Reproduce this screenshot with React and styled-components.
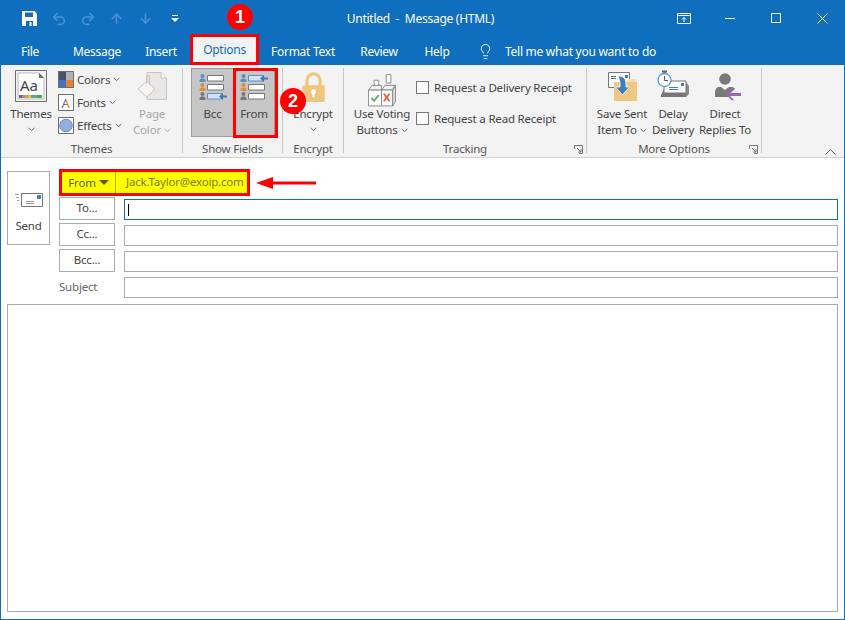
import React from 'react';
import styled, { createGlobalStyle } from 'styled-components';
import { Undo2, Redo2, ArrowUp, ArrowDown, Lightbulb } from 'lucide-react';

const GlobalStyle = createGlobalStyle`
  html, body { margin: 0; padding: 0; background: #fff; }
  * { box-sizing: border-box; }
`;

const Window = styled.div`
  position: relative;
  width: 845px;
  height: 620px;
  overflow: hidden;
  background: #fff;
  border: 1px solid #106ebe;
  border-top: 0;
  font-family: "Noto Sans", "Open Sans", sans-serif;
  font-size: 11.5px;
  letter-spacing: -0.2px;
  color: #444;
`;

const TitleBar = styled.div`
  display: grid;
  grid-template-columns: 1fr auto 1fr;
  align-items: center;
  height: 37px;
  margin: 0 -1px;
  background: #106ebe;
  color: #fff;
`;

const QuickAccess = styled.div`
  display: flex;
  align-items: center;
  padding-left: 15px;
`;

const QuickButton = styled.div`
  display: flex;
  align-items: center;
  justify-content: center;
  width: 29px;
  height: 36px;
  color: ${p => (p.$faded ? '#4b93d2' : '#fff')};
`;

const WindowTitle = styled.div`
  margin-left: -4px;
  font-size: 12px;
  letter-spacing: -0.27px;
  white-space: pre;
`;

const WindowControls = styled.div`
  display: flex;
  justify-self: end;
`;

const WindowButton = styled.div`
  display: flex;
  align-items: center;
  justify-content: center;
  width: 46px;
  height: 36px;
`;

const TabRow = styled.div`
  display: flex;
  align-items: flex-end;
  height: 28px;
  margin: 0 -1px;
  padding-left: 1px;
  background: #106ebe;
  color: #fff;
  font-size: 12px;
  letter-spacing: -0.27px;
`;

const Tab = styled.div`
  display: flex;
  align-items: center;
  justify-content: center;
  width: ${p => p.$w}px;
  height: 28px;
  white-space: nowrap;
`;

const ActiveTab = styled(Tab)`
  height: 31px;
  margin-left: 3px;
  background: #f3f3f3;
  color: #106ebe;
  border: 3px solid #f00;
`;

const TellMe = styled.div`
  display: flex;
  align-items: center;
  gap: 11px;
  height: 28px;
  margin-left: 14px;
  white-space: nowrap;
`;

const Ribbon = styled.div`
  position: relative;
  display: flex;
  height: 93px;
  padding: 3px 0 4px;
  background: #f3f3f3;
  border-bottom: 1px solid #d2d2d2;
`;

const Group = styled.div`
  position: relative;
  width: ${p => p.$w}px;
  height: 85px;
  border-right: 1px solid #c8c8c8;
`;

const GroupBody = styled.div`
  display: flex;
  gap: ${p => p.$gap || 0}px;
  height: 73px;
  padding-left: ${p => p.$pad || 0}px;
`;

const GroupLabel = styled.div`
  height: 16px;
  line-height: 16px;
  text-align: center;
  color: #555;
  white-space: nowrap;
`;

const Launcher = styled.svg`
  position: absolute;
  right: 3px;
  bottom: -1px;
`;

const LargeButton = styled.div`
  display: flex;
  flex-direction: column;
  align-items: center;
  flex: none;
  width: ${p => p.$w}px;
  height: 69px;
  color: ${p => (p.$disabled ? '#a6a6a6' : '#444')};
`;

const IconSlot = styled.div`
  display: flex;
  align-items: flex-end;
  justify-content: center;
  height: ${p => 38 + (p.$drop || 0)}px;
  margin-bottom: ${p => -(p.$drop || 0)}px;
  flex: none;
  padding-bottom: ${p => p.$lift || 0}px;
`;

const ToggleButton = styled(LargeButton)`
  background: #c6c6c6;
  border: 1px solid #9c9c9c;
  border-right-width: ${p => (p.$last ? 1 : 0)}px;

  ${IconSlot} {
    height: 37px;
  }
`;

const ButtonLine = styled.div`
  display: flex;
  align-items: center;
  gap: 3px;
  height: 16px;
  line-height: 16px;
  white-space: nowrap;
`;

const SmallStack = styled.div`
  display: flex;
  flex-direction: column;
  gap: 6px;
  width: 71px;
  padding-top: 3px;
  margin-left: 4px;
  flex: none;
`;

const SmallRow = styled.div`
  display: flex;
  align-items: center;
  gap: 3px;
  height: 17px;
  white-space: nowrap;
`;

const Checks = styled.div`
  display: flex;
  flex-direction: column;
  gap: 14px;
  padding-top: 11px;
`;

const CheckRow = styled.div`
  display: flex;
  align-items: center;
  gap: 5px;
  height: 17px;
  white-space: nowrap;
`;

const CheckBox = styled.div`
  width: 13px;
  height: 13px;
  background: #fff;
  border: 1px solid #777;
`;

const CollapseRibbon = styled.svg`
  position: absolute;
  right: 8px;
  bottom: 2px;
`;

const Compose = styled.div`
  display: flex;
  flex-direction: column;
  gap: 6px;
  padding: 11px 6px 0;
`;

const Header = styled.div`
  display: flex;
  gap: 9px;
`;

const SendButton = styled.div`
  display: flex;
  flex-direction: column;
  align-items: center;
  width: 43px;
  height: 74px;
  margin-top: 2px;
  padding-top: 21px;
  gap: 10px;
  background: #fff;
  border: 1px solid #ababab;
  flex: none;
`;

const Fields = styled.div`
  display: flex;
  flex-direction: column;
  gap: 3px;
`;

const FromRow = styled.div`
  display: flex;
  align-items: center;
  width: 191px;
  height: 27px;
  margin-bottom: -2px;
  background: #ff0;
  border: 3px solid #f00;
  color: #6f6f00;
`;

const FromButton = styled.div`
  display: flex;
  align-items: center;
  justify-content: center;
  gap: 3px;
  width: 54px;
  height: 100%;
  border-right: 1px solid #b0b000;
  color: #5c5c00;
`;

const FromAddress = styled.div`
  padding-left: 10px;
  margin-top: -2px;
  color: #7a7a00;
`;

const FieldRow = styled.div`
  display: grid;
  grid-template-columns: 56px 714px;
  gap: 9px;
  align-items: end;
`;

const FieldButton = styled.div`
  display: flex;
  align-items: center;
  justify-content: center;
  height: 23px;
  padding-bottom: 2px;
  background: #fff;
  border: 1px solid #ababab;
`;

const FieldLabel = styled.div`
  height: 23px;
  line-height: 23px;
  color: #666;
`;

const FieldInput = styled.div`
  display: flex;
  align-items: center;
  height: 21px;
  padding-left: 3px;
  border: 1px solid ${p => (p.$focused ? '#106ebe' : '#ababab')};
`;

const Caret = styled.div`
  width: 1px;
  height: 12px;
  background: #000;
`;

const MessageBody = styled.div`
  height: 308px;
  border: 1px solid #ababab;
`;

const NumberBadge = styled.div`
  position: absolute;
  left: ${p => p.$x}px;
  top: ${p => p.$y}px;
  display: flex;
  align-items: center;
  justify-content: center;
  width: 26px;
  height: 26px;
  border-radius: 50%;
  background: #f00;
  color: #fff;
  font-family: "Liberation Sans", sans-serif;
  font-size: 18px;
  font-weight: 700;
`;

const FromHighlight = styled.div`
  position: absolute;
  left: 232px;
  top: 68px;
  width: 45px;
  height: 70px;
  border: 3px solid #f00;
`;

const PointerArrow = styled.svg`
  position: absolute;
  left: 255px;
  top: 177px;
`;

const Chevron = ({ color = '#666' }) => (
  <svg width="7" height="5" viewBox="0 0 7 5">
    <path d="M.7 1l2.800 2.600L6.300 1" fill="none" stroke={color} />
  </svg>
);

const SaveIcon = () => (
  <svg width="15" height="15" viewBox="0 0 15 15">
    <path d="M0 0h12.500L15 2.500V15H0z" fill="#fff" />
    <path d="M3 1.500h8V6H3z" fill="#106ebe" />
    <path d="M4 10h7v5H4z" fill="#106ebe" />
    <path d="M7.500 11h2v4h-2z" fill="#fff" />
  </svg>
);

const CustomizeIcon = () => (
  <svg width="8" height="9" viewBox="0 0 8 9">
    <path d="M1 1h6v1H1zM0 4h8L4 8z" fill="#fff" />
  </svg>
);

const DisplayOptionsIcon = () => (
  <svg width="14" height="11" viewBox="0 0 14 11" fill="none" stroke="#fff">
    <path d="M.5.5h13v10H.5zM.5 2.500h13M7 9V4.500M5 6.500l2-2 2 2" />
  </svg>
);

const MinimizeIcon = () => (
  <svg width="11" height="11" viewBox="0 0 11 11"><path d="M0 5.500h10" stroke="#fff" /></svg>
);

const MaximizeIcon = () => (
  <svg width="11" height="11" viewBox="0 0 11 11"><path d="M.5.5h9v9h-9z" fill="none" stroke="#fff" /></svg>
);

const CloseIcon = () => (
  <svg width="11" height="11" viewBox="0 0 11 11"><path d="M.5.5l10 10M10.500.5l-10 10" stroke="#fff" /></svg>
);

const ThemesIcon = () => (
  <svg width="32" height="32" viewBox="0 0 32 32">
    <path d="M.5.5h31v31H.5z" fill="#f3f3f3" stroke="#6e6e6e" />
    <path d="M3 3h21l5 5v21H3z" fill="#fff" stroke="#b8b8b8" />
    <path d="M24 3l5 5h-5z" fill="#6e6e6e" />
    <text x="5" y="21" fontFamily="Noto Sans, sans-serif" fontSize="15" fill="#444">Aa</text>
    <path d="M4 25h3v3H4z" fill="#4472c4" />
    <path d="M7 25h3v3H7z" fill="#ed7d31" />
    <path d="M10 25h3v3h-3z" fill="#a5a5a5" />
    <path d="M13 25h3v3h-3z" fill="#ffc000" />
    <path d="M16 25h3v3h-3z" fill="#5b9bd5" />
    <path d="M19 25h3v3h-3z" fill="#70ad47" />
    <path d="M22 25h5v3h-5z" fill="#44aa66" />
  </svg>
);

const ColorsIcon = () => (
  <svg width="16" height="17" viewBox="0 0 16 17">
    <path d="M0 0h8v9H0z" fill="#44546a" />
    <path d="M8 0h8v9H8z" fill="#b2b2b2" />
    <path d="M0 9h8v8H0z" fill="#4472c4" />
    <path d="M8 9h8v8H8z" fill="#ed7d31" />
    <path d="M.5.5h15v16H.5z" fill="none" stroke="#6e6e6e" />
  </svg>
);

const FontsIcon = () => (
  <svg width="16" height="17" viewBox="0 0 16 17">
    <defs>
      <linearGradient id="fontA" x1="0" x2="1" y1="0" y2="0">
        <stop offset="0.45" stopColor="#3f6fb5" />
        <stop offset="0.55" stopColor="#d9772b" />
      </linearGradient>
    </defs>
    <path d="M.5.5h15v16H.5z" fill="#fff" stroke="#6e6e6e" />
    <text x="3.400" y="13.500" fontFamily="Noto Sans, sans-serif" fontSize="13" fill="url(#fontA)">A</text>
  </svg>
);

const EffectsIcon = () => (
  <svg width="16" height="17" viewBox="0 0 16 17">
    <path d="M.5.5h15v16H.5z" fill="#fff" stroke="#6e6e6e" />
    <circle cx="8" cy="8.500" r="6.300" fill="#93aee0" stroke="#6d8cc8" />
  </svg>
);

const PageColorIcon = () => (
  <svg width="30" height="28" viewBox="0 0 30 28">
    <path d="M10 .5h14l5.500 5.500v21.500H10z" fill="#e9e6e6" stroke="#c9c5c5" />
    <path d="M24 .5V6h5.500" fill="#f8f8f8" stroke="#c9c5c5" />
    <path d="M10 9l8 8-8 8-9-8z" fill="#f7f5f5" stroke="#c4c0c0" />
    <path d="M9.500 12V5a1.500 1.500 0 0 1 3 0v8" fill="none" stroke="#c4c0c0" />
  </svg>
);

const FieldsIcon = ({ arrowRow }) => {
  const rows = [
    { y: 0, color: '#5a8fc8' },
    { y: 9, color: '#e08a3c' },
    { y: 18, color: '#777' },
  ];
  return (
    <svg width="28" height="26" viewBox="0 0 28 26">
      {rows.map((row, i) => (
        <g key={i}>
          <circle cx="3.500" cy={row.y + 2} r="2" fill={row.color} />
          <path d={`M.5 ${row.y + 8}v-2l1.500-1.500h3l1.500 1.500v2z`} fill={row.color} />
          <path
            d={`M8.500 ${row.y + 1.5}h${i === arrowRow ? 15 : 16}v5.500h-${i === arrowRow ? 15 : 16}z`}
            fill={i === arrowRow ? '#d3e2f2' : '#fff'}
            stroke={i === arrowRow ? '#5a8fc8' : '#777'}
          />
          {i === arrowRow && (
            <path d={`M28 ${row.y + 3.5}h-4V${row.y + 1}l-4 3.500 4 3.500v-2.500h4z`} fill="#3d78b8" />
          )}
        </g>
      ))}
    </svg>
  );
};

const LockIcon = () => (
  <svg width="23" height="30" viewBox="0 0 24 32">
    <path d="M5 15V9a7 7 0 0 1 14 0v6" fill="none" stroke="#edc77f" strokeWidth="3.400" />
    <rect x="0" y="14" width="24" height="18" rx="2" fill="#edc77f" />
    <circle cx="12" cy="21" r="2.600" fill="#fff" />
    <path d="M11 22h2v5h-2z" fill="#fff" />
  </svg>
);

const VotingIcon = () => (
  <svg width="28" height="34" viewBox="0 0 30 36">
    <path d="M6.500 6.500h5v8h-5zM19.500 .5h5v9h-5z" fill="#fff" stroke="#888" />
    <path d="M.5 17l4-5h10v5zM15 17l3-5h11.500l-4 5z" fill="#f2f2f2" stroke="#888" />
    <path d="M.5 17h14v17H.5z" fill="#fff" stroke="#888" />
    <path d="M14.500 17h12v17h-12z" fill="#fff" stroke="#888" />
    <path d="M26.500 17l3-5v17l-3 5z" fill="#ddd" stroke="#888" />
    <path d="M3.500 25.500l3 3 5-6" fill="none" stroke="#64ab7c" strokeWidth="2" />
    <path d="M17 21l6 8M23 21l-6 8" fill="none" stroke="#e0623f" strokeWidth="2" />
  </svg>
);

const SaveSentIcon = () => (
  <svg width="29" height="29" viewBox="0 0 29 29">
    <path d="M.5.5h21v15H.5z" fill="#fff" stroke="#777" />
    <path d="M17 3h3v3h-3zM3 4h5v1H3zM3 6h5v1H3z" fill="#3f7fc0" />
    <path d="M6 10h23v19H6z" fill="#eec881" />
    <path d="M18 10l2-3h7l2 3z" fill="#f6ddac" />
    <path d="M10 4c6 0 8 3 8 8v3h3.500l-7 8-7-8H12v-3c0-3-1-5-2-8z" fill="#3f7fc0" stroke="#fff" strokeWidth=".8" />
  </svg>
);

const DelayIcon = () => (
  <svg width="32" height="28" viewBox="0 0 32 28">
    <path d="M4 25l3-6h19l3 2v6H4z" fill="#777" />
    <path d="M29 12l3 4v8l-3 3z" fill="#888" />
    <path d="M7 11h22v12H7z" fill="#fff" stroke="#777" />
    <path d="M24 13h3v3h-3zM12 17h9v1h-9zM12 19h9v1h-9z" fill="#3f7fc0" />
    <path d="M5 .5h5v2H5zM6.500 2h2v2h-2z" fill="#666" />
    <circle cx="7.500" cy="10" r="6.500" fill="#fff" stroke="#5b9bd5" strokeWidth="1.300" />
    <path d="M7.500 6v4.500H11" fill="none" stroke="#555" />
  </svg>
);

const DirectRepliesIcon = () => (
  <svg width="32" height="30" viewBox="-6 0 32 30">
    <circle cx="10" cy="6" r="5.800" fill="#7a7a7a" />
    <path d="M0 24v-5c0-3 2-5 4-5h2l4 3 4-3h3c1.500 0 2.500 1 3 2l-7 6v2z" fill="#7a7a7a" />
    <path d="M26 20h-11l4-4-2-.5-6 6 6 6 2-.5-4-4h11z" fill="#9b66b8" />
  </svg>
);

const SendIcon = () => (
  <svg width="28" height="15" viewBox="0 0 28 15">
    <path d="M6.500.5h21v13h-21z" fill="#fff" stroke="#777" />
    <path d="M22 2h4v4h-4z" fill="#3f7fc0" />
    <path d="M11 8h8v1h-8zM11 10h8v1h-8zM0 1h4v1H0zM1 4h3v1H1zM2 7h2v1H2z" fill="#999" />
  </svg>
);

const LauncherIcon = () => (
  <Launcher width="9" height="9" viewBox="0 0 9 9">
    <path d="M.5 4V.5h8v8H5M3 3l4 4M7 4v3H4" fill="none" stroke="#777" />
  </Launcher>
);

const App = () => {
  return (
    <Window>
      <GlobalStyle />
      <TitleBar>
        <QuickAccess>
          <QuickButton><SaveIcon /></QuickButton>
          <QuickButton $faded><Undo2 size={16} strokeWidth={2.4} /></QuickButton>
          <QuickButton $faded><Redo2 size={16} strokeWidth={2.4} /></QuickButton>
          <QuickButton $faded><ArrowUp size={15} strokeWidth={2.4} /></QuickButton>
          <QuickButton $faded><ArrowDown size={15} strokeWidth={2.4} /></QuickButton>
          <QuickButton><CustomizeIcon /></QuickButton>
        </QuickAccess>
        <WindowTitle>Untitled  -  Message (HTML)</WindowTitle>
        <WindowControls>
          <WindowButton><DisplayOptionsIcon /></WindowButton>
          <WindowButton><MinimizeIcon /></WindowButton>
          <WindowButton><MaximizeIcon /></WindowButton>
          <WindowButton><CloseIcon /></WindowButton>
        </WindowControls>
      </TitleBar>

      <TabRow>
        <Tab $w={58}>File</Tab>
        <Tab $w={76}>Message</Tab>
        <Tab $w={52}>Insert</Tab>
        <ActiveTab $w={69}>Options</ActiveTab>
        <Tab $w={88}>Format Text</Tab>
        <Tab $w={64}>Review</Tab>
        <Tab $w={52}>Help</Tab>
        <TellMe>
          <Lightbulb size={17} strokeWidth={1.3} />
          Tell me what you want to do
        </TellMe>
      </TabRow>

      <Ribbon>
        <Group $w={182}>
          <GroupBody $pad={7}>
            <LargeButton $w={46}>
              <IconSlot $lift={4}><ThemesIcon /></IconSlot>
              <ButtonLine>Themes</ButtonLine>
              <ButtonLine><Chevron /></ButtonLine>
            </LargeButton>
            <SmallStack>
              <SmallRow><ColorsIcon />Colors <Chevron /></SmallRow>
              <SmallRow><FontsIcon />Fonts <Chevron /></SmallRow>
              <SmallRow><EffectsIcon />Effects <Chevron /></SmallRow>
            </SmallStack>
            <LargeButton $w={46} $disabled>
              <IconSlot $lift={6}><PageColorIcon /></IconSlot>
              <ButtonLine>Page</ButtonLine>
              <ButtonLine>Color <Chevron color="#a6a6a6" /></ButtonLine>
            </LargeButton>
          </GroupBody>
          <GroupLabel>Themes</GroupLabel>
        </Group>

        <Group $w={100}>
          <GroupBody $pad={8}>
            <ToggleButton $w={42}>
              <IconSlot $lift={6}><FieldsIcon arrowRow={2} /></IconSlot>
              <ButtonLine>Bcc</ButtonLine>
            </ToggleButton>
            <ToggleButton $w={42} $last>
              <IconSlot $lift={6}><FieldsIcon arrowRow={0} /></IconSlot>
              <ButtonLine>From</ButtonLine>
            </ToggleButton>
          </GroupBody>
          <GroupLabel>Show Fields</GroupLabel>
        </Group>

        <Group $w={61}>
          <GroupBody>
            <LargeButton $w={60}>
              <IconSlot $lift={4}><LockIcon /></IconSlot>
              <ButtonLine>Encrypt</ButtonLine>
              <ButtonLine><Chevron /></ButtonLine>
            </LargeButton>
          </GroupBody>
          <GroupLabel>Encrypt</GroupLabel>
        </Group>

        <Group $w={243}>
          <GroupBody $pad={4}>
            <LargeButton $w={68}>
              <IconSlot $drop={2}><VotingIcon /></IconSlot>
              <ButtonLine>Use Voting</ButtonLine>
              <ButtonLine>Buttons <Chevron /></ButtonLine>
            </LargeButton>
            <Checks>
              <CheckRow><CheckBox />Request a Delivery Receipt</CheckRow>
              <CheckRow><CheckBox />Request a Read Receipt</CheckRow>
            </Checks>
          </GroupBody>
          <GroupLabel>Tracking</GroupLabel>
          <LauncherIcon />
        </Group>

        <Group $w={175}>
          <GroupBody $pad={8} $gap={2}>
            <LargeButton $w={54}>
              <IconSlot $lift={5}><SaveSentIcon /></IconSlot>
              <ButtonLine>Save Sent</ButtonLine>
              <ButtonLine>Item To <Chevron /></ButtonLine>
            </LargeButton>
            <LargeButton $w={44}>
              <IconSlot $lift={8}><DelayIcon /></IconSlot>
              <ButtonLine>Delay</ButtonLine>
              <ButtonLine>Delivery</ButtonLine>
            </LargeButton>
            <LargeButton $w={56}>
              <IconSlot $lift={3}><DirectRepliesIcon /></IconSlot>
              <ButtonLine>Direct</ButtonLine>
              <ButtonLine>Replies To</ButtonLine>
            </LargeButton>
          </GroupBody>
          <GroupLabel>More Options</GroupLabel>
          <LauncherIcon />
        </Group>

        <CollapseRibbon width="11" height="6" viewBox="0 0 11 6">
          <path d="M.5 5.500l5-5 5 5" fill="none" stroke="#666" />
        </CollapseRibbon>
      </Ribbon>

      <Compose>
        <Header>
          <SendButton>
            <SendIcon />
            Send
          </SendButton>
          <Fields>
            <FromRow>
              <FromButton>
                From
                <svg width="10" height="5" viewBox="0 0 10 5"><path d="M0 0h10L5 5z" fill="#5c5c00" /></svg>
              </FromButton>
              <FromAddress>Jack.Taylor@exoip.com</FromAddress>
            </FromRow>
            <FieldRow>
              <FieldButton>To...</FieldButton>
              <FieldInput $focused><Caret /></FieldInput>
            </FieldRow>
            <FieldRow>
              <FieldButton>Cc...</FieldButton>
              <FieldInput />
            </FieldRow>
            <FieldRow>
              <FieldButton>Bcc...</FieldButton>
              <FieldInput />
            </FieldRow>
            <FieldRow>
              <FieldLabel>Subject</FieldLabel>
              <FieldInput />
            </FieldRow>
          </Fields>
        </Header>
        <MessageBody />
      </Compose>

      <NumberBadge $x={226} $y={4}>1</NumberBadge>
      <FromHighlight />
      <NumberBadge $x={279} $y={88}>2</NumberBadge>
      <PointerArrow width="60" height="12" viewBox="0 0 60 12">
        <path d="M0 6l17-6v4.500h43v3H17V12z" fill="#f00" />
      </PointerArrow>
    </Window>
  );
};

export default App;
